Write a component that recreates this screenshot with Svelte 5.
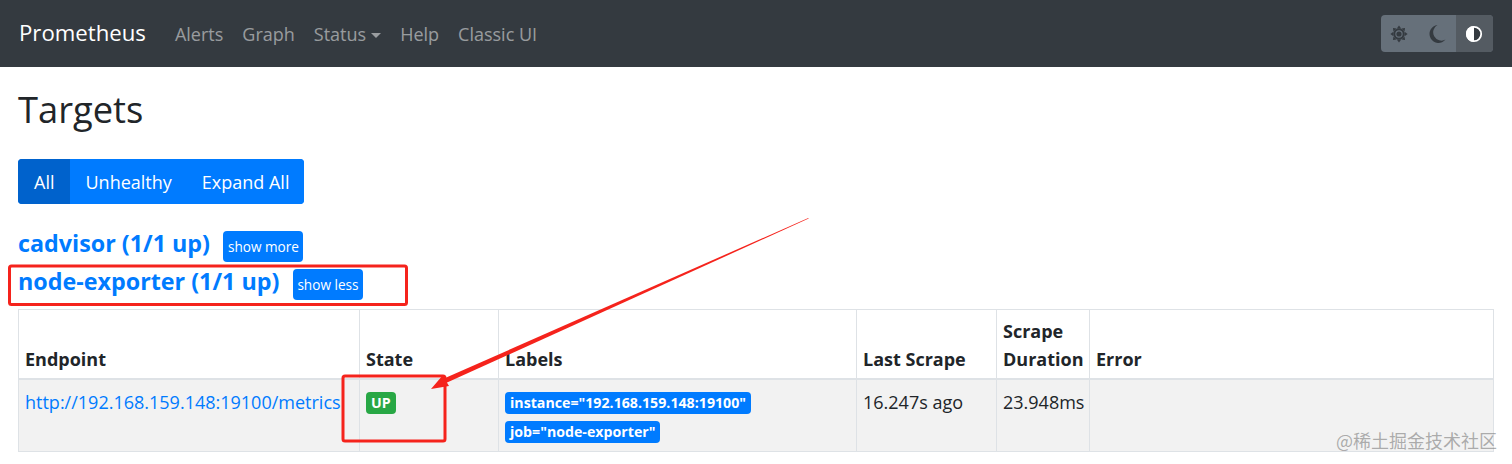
<script>
  const navItems = ['Alerts', 'Graph', 'Status', 'Help', 'Classic UI'];
  const sunRays = [0, 45, 90, 135, 180, 225, 270, 315];
  const labels = ['instance="192.168.159.148:19100"', 'job="node-exporter"'];
</script>

<div class="page">
  <nav class="navbar">
    <span class="brand">Prometheus</span>
    <ul class="nav">
      {#each navItems as item}
        <li class:caret={item === 'Status'}>{item}</li>
      {/each}
    </ul>
    <div class="theme-toggle">
      <span class="theme-btn">
        <svg width="18" height="18" viewBox="-9 -9 18 18">
          {#each sunRays as r}
            <path d="M-2.2 -5.6 L0 -8.6 L2.2 -5.6 Z" fill="#343a40" transform="rotate({r})" />
          {/each}
          <circle r="4.7" fill="none" stroke="#343a40" stroke-width="2" />
          <circle r="2.6" fill="#343a40" />
        </svg>
      </span>
      <span class="theme-btn">
        <svg width="20" height="20" viewBox="0 0 20 20">
          <path d="M10.5 1 A9 9 0 1 0 18.5 15.6 A7.2 7.2 0 0 1 10.5 1 Z" fill="#343a40" />
        </svg>
      </span>
      <span class="theme-btn active">
        <svg width="18" height="18" viewBox="0 0 18 18">
          <circle cx="9" cy="9" r="7.2" fill="#343a40" stroke="#fff" stroke-width="1.8" />
          <path d="M9 1 A8 8 0 0 0 9 17 Z" fill="#fff" />
        </svg>
      </span>
    </div>
  </nav>

  <main class="container">
    <h1>Targets</h1>

    <div class="btn-group">
      <button class="active">All</button>
      <button>Unhealthy</button>
      <button>Expand All</button>
    </div>

    <div class="pool">
      <a href="#cadvisor">cadvisor (1/1 up)</a>
      <button class="small">show more</button>
    </div>
    <div class="pool second">
      <a href="#node-exporter">node-exporter (1/1 up)</a>
      <button class="small">show less</button>
    </div>

    <table>
      <colgroup>
        <col style="width: 341px" />
        <col style="width: 139px" />
        <col style="width: 358px" />
        <col style="width: 140px" />
        <col style="width: 93px" />
        <col />
      </colgroup>
      <thead>
        <tr>
          <th>Endpoint</th>
          <th>State</th>
          <th>Labels</th>
          <th>Last Scrape</th>
          <th>Scrape Duration</th>
          <th>Error</th>
        </tr>
      </thead>
      <tbody>
        <tr>
          <td><a href="#metrics">http://192.168.159.148:19100/metrics</a></td>
          <td><span class="badge up">UP</span></td>
          <td>
            {#each labels as label}
              <div class="label-row"><span class="badge label">{label}</span></div>
            {/each}
          </td>
          <td>16.247s ago</td>
          <td>23.948ms</td>
          <td></td>
        </tr>
      </tbody>
    </table>
  </main>

  <svg class="annotations" width="1512" height="464" viewBox="0 0 1512 464">
    <rect x="9.5" y="266" width="397" height="38.5" rx="2" />
    <rect x="343" y="376" width="102" height="65" rx="2" />
    <path class="head" d="M808.7 218.6 L808.3 218 L444 378.5 L446 383 Z" />
    <path class="head" d="M431 389 L443 375 L446 381 L449 386 Z" />
  </svg>

  <span class="watermark">@稀土掘金技术社区</span>
</div>

<style>
  :global(body) {
    margin: 0;
    background: #fff;
  }

  .page {
    position: relative;
    width: 1512px;
    height: 464px;
    overflow: hidden;
    font-family: "Open Sans", "Noto Sans", sans-serif;
    font-size: 18px;
    color: #212529;
  }

  .navbar {
    height: 67px;
    box-sizing: border-box;
    background: #343a40;
    display: flex;
    align-items: center;
    padding: 0 19px;
  }

  .brand {
    color: #fff;
    font-size: 22.2px;
    margin-top: -3px;
  }

  .nav {
    list-style: none;
    display: flex;
    gap: 19px;
    margin: 0 0 0 29px;
    padding: 0;
    color: rgba(255, 255, 255, 0.5);
    font-size: 18px;
  }

  .caret::after {
    content: '';
    display: inline-block;
    margin-left: 5px;
    vertical-align: 3px;
    border-top: 5px solid;
    border-left: 5px solid transparent;
    border-right: 5px solid transparent;
  }

  .theme-toggle {
    margin-left: auto;
    display: flex;
    height: 37px;
    border-radius: 4px;
    overflow: hidden;
    background: #66707a;
  }

  .theme-btn {
    width: 37.5px;
    display: flex;
    align-items: center;
    justify-content: center;
  }

  .theme-btn.active {
    background: #545b62;
  }

  .container {
    padding: 0 18px;
  }

  h1 {
    margin: 0;
    padding-top: 19px;
    height: 72px;
    box-sizing: border-box;
    font-size: 36.3px;
    font-weight: 500;
    line-height: 46px;
  }

  .btn-group {
    display: inline-flex;
    margin-top: 20px;
    height: 45px;
    vertical-align: top;
    border-radius: 4px;
    overflow: hidden;
    background: #007bff;
  }

  button {
    border: 0;
    color: #fff;
    background: #007bff;
    font: inherit;
    padding: 0;
  }

  .btn-group button {
    padding: 0 15px;
  }

  .btn-group button.active {
    padding: 0 16px;
    background: #0062cc;
  }

  .pool {
    display: flex;
    align-items: center;
    gap: 13.5px;
    height: 31px;
    margin-top: 27px;
  }

  .pool.second {
    margin-top: 7px;
  }

  .pool a {
    color: #007bff;
    font-size: 23.3px;
    font-weight: 700;
    text-decoration: none;
    padding-bottom: 7px;
  }

  .small {
    height: 31px;
    padding: 0 4.5px;
    border-radius: 4px;
    font-size: 13.6px;
  }

  table {
    width: 1476px;
    margin-top: 9px;
    table-layout: fixed;
    border-collapse: collapse;
    border: 1px solid #dee2e6;
  }

  th,
  td {
    border: 1px solid #dee2e6;
    padding: 7px 6px;
    text-align: left;
    vertical-align: top;
    line-height: 28px;
  }

  th {
    vertical-align: bottom;
    font-weight: 700;
    border-bottom-width: 2px;
    height: 56px;
    padding: 7px 6px 5px;
  }

  tbody tr {
    background: #f2f2f2;
    height: 72px;
  }

  td {
    padding-top: 8px;
  }

  td a {
    color: #007bff;
    text-decoration: none;
  }

  .badge {
    display: inline-block;
    border-radius: 4px;
    color: #fff;
    font-size: 14.2px;
    font-weight: 700;
    line-height: 22px;
    padding: 0 5px;
  }

  .up {
    background: #28a745;
    margin-top: 4px;
    vertical-align: top;
  }

  .label {
    background: #007bff;
    vertical-align: top;
  }

  .label-row {
    height: 29px;
    padding-top: 5px;
    box-sizing: border-box;
  }

  td:nth-child(3) {
    padding-top: 7px;
    padding-bottom: 0;
  }

  .annotations {
    position: absolute;
    inset: 0;
    pointer-events: none;
  }

  .annotations rect {
    fill: none;
    stroke: #f5231c;
    stroke-width: 3;
  }

  .annotations .head {
    fill: #f5231c;
  }

  .watermark {
    position: absolute;
    left: 1336px;
    top: 429px;
    font-family: "Noto Sans CJK SC", sans-serif;
    font-size: 18px;
    line-height: 22px;
    color: rgba(110, 110, 110, 0.55);
  }
</style>
